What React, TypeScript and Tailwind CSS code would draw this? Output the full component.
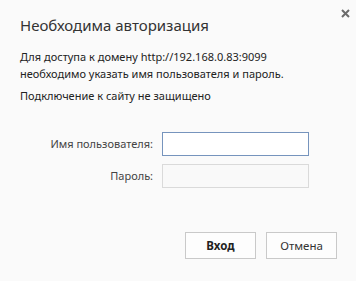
export default function App() {
  return (
    <div className="relative w-[356px] h-[281px] bg-[#fafafa] text-[#222] font-['Noto_Sans',sans-serif]">
      <button className="absolute right-[5px] top-[7px] w-[12px] h-[12px] flex items-center justify-center">
        <svg width="9" height="9" viewBox="0 0 9 9">
          <path d="M1 1L8 8M8 1L1 8" stroke="#6b6b6b" strokeWidth="2" />
        </svg>
      </button>

      <div className="pl-[20px] pt-[15px]">
        <h1 className="text-[15px] leading-[20px] text-[#333]">Необходима авторизация</h1>
        <p className="mt-[13px] text-[11px] leading-[17px]">
          Для доступа к домену http://192.168.0.83:9099
          <br />
          необходимо указать имя пользователя и пароль.
        </p>
        <p className="mt-[5px] text-[11px] leading-[17px]">Подключение к сайту не защищено</p>
      </div>

      <div className="mt-[28px] pl-[20px] grid grid-cols-[133px_147px] gap-x-[9px] gap-y-[8px] items-center">
        <label className="text-right text-[11px] text-[#444]">Имя пользователя:</label>
        <input className="h-[24px] border border-[#7694bd] bg-white outline-none" />
        <label className="text-right text-[11px] text-[#444]">Пароль:</label>
        <input type="password" className="h-[24px] border border-[#dadada] bg-[#f9f9f9] outline-none" />
      </div>

      <div className="mt-[44px] pr-[19px] flex justify-end gap-[10px]">
        <button className="w-[71px] h-[27px] border border-[#c9c9c9] bg-[#fdfdfd] text-[11.5px] font-bold text-[#222]">
          Вход
        </button>
        <button className="w-[71px] h-[27px] border border-[#c9c9c9] bg-[#fdfdfd] text-[11.5px] text-[#333]">
          Отмена
        </button>
      </div>
    </div>
  )
}
